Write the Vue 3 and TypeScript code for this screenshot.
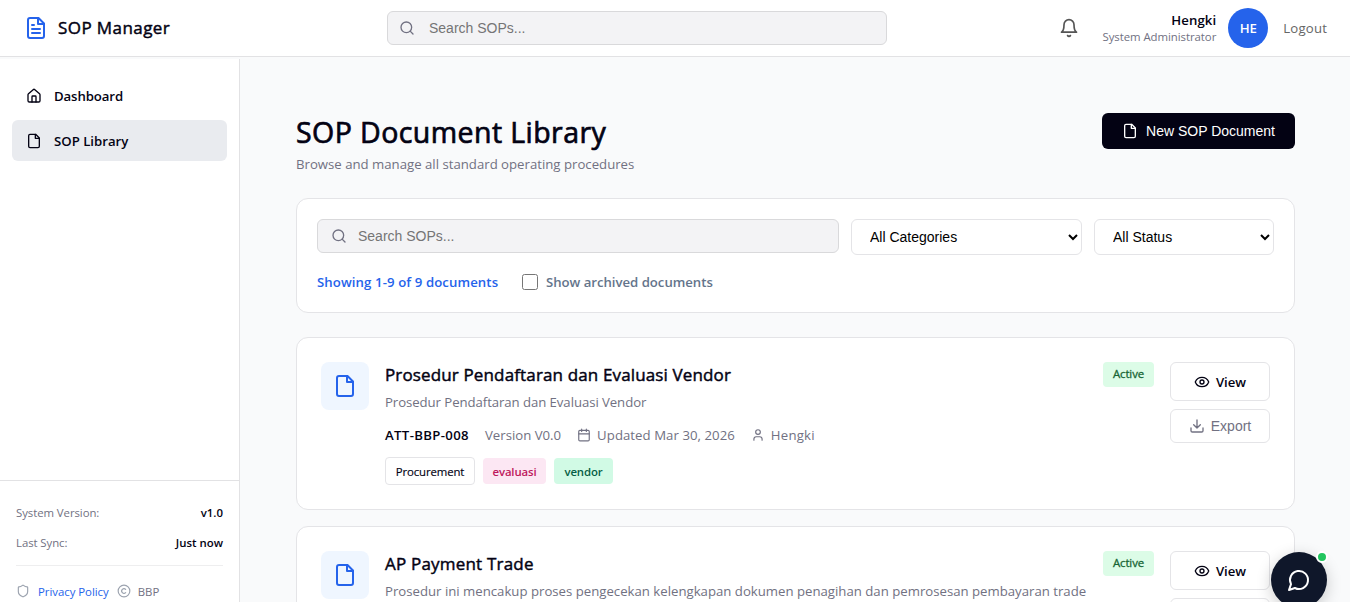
<script setup lang="ts">
interface Tag { label: string; tone: string }
interface Doc {
  title: string
  description: string
  code: string
  version: string
  updated: string
  owner: string
  category: string
  tags: Tag[]
  cls: string
}

const docs: Doc[] = [
  {
    title: 'Prosedur Pendaftaran dan Evaluasi Vendor',
    description: 'Prosedur Pendaftaran dan Evaluasi Vendor',
    code: 'ATT-BBP-008',
    version: 'Version V0.0',
    updated: 'Updated Mar 30, 2026',
    owner: 'Hengki',
    category: 'Procurement',
    tags: [{ label: 'evaluasi', tone: 'pink' }, { label: 'vendor', tone: 'mint' }],
    cls: 'doc-a',
  },
  {
    title: 'AP Payment Trade',
    description: 'Prosedur ini mencakup proses pengecekan kelengkapan dokumen penagihan dan pemrosesan pembayaran trade',
    code: '',
    version: '',
    updated: '',
    owner: '',
    category: '',
    tags: [],
    cls: 'doc-b',
  },
]
</script>

<template>
  <div class="app">
    <header class="topbar">
      <div class="brand">
        <svg class="ic brand-ic" viewBox="0 0 24 24"><path d="M14.5 2H6a2 2 0 0 0-2 2v16a2 2 0 0 0 2 2h12a2 2 0 0 0 2-2V7.5L14.5 2z" /><path d="M14 2v6h6M10 9H8M16 13H8M16 17H8" /></svg>
        <span class="brand-name">SOP Manager</span>
      </div>
      <div class="search top-search">
        <svg class="ic" viewBox="0 0 24 24"><circle cx="11" cy="11" r="8" /><path d="m21 21-4.3-4.3" /></svg>
        <input type="text" placeholder="Search SOPs..." />
      </div>
      <div class="account">
        <svg class="ic bell" viewBox="0 0 24 24"><path d="M10.3 21a1.94 1.94 0 0 0 3.4 0" /><path d="M18 8A6 6 0 0 0 6 8c0 7-3 9-3 9h18s-3-2-3-9" /></svg>
        <div class="who">
          <div class="who-name">Hengki</div>
          <div class="who-role">System Administrator</div>
        </div>
        <div class="avatar">HE</div>
        <a class="logout">Logout</a>
      </div>
    </header>

    <div class="body">
      <aside class="sidebar">
        <nav>
          <a class="nav-item">
            <svg class="ic" viewBox="0 0 24 24"><path d="M3 10a2 2 0 0 1 .7-1.5l7-6a2 2 0 0 1 2.6 0l7 6A2 2 0 0 1 21 10v9a2 2 0 0 1-2 2H5a2 2 0 0 1-2-2z" /><path d="M15 21v-8a1 1 0 0 0-1-1h-4a1 1 0 0 0-1 1v8" /></svg>
            <span class="nav-dash">Dashboard</span>
          </a>
          <a class="nav-item active">
            <svg class="ic" viewBox="0 0 24 24"><path d="M14.5 2H6a2 2 0 0 0-2 2v16a2 2 0 0 0 2 2h12a2 2 0 0 0 2-2V7.5L14.5 2z" /><path d="M14 2v6h6" /></svg>
            <span class="nav-lib">SOP Library</span>
          </a>
        </nav>
        <div class="side-foot">
          <div class="foot-row"><span>System Version:</span><b>v1.0</b></div>
          <div class="foot-row"><span>Last Sync:</span><b>Just now</b></div>
          <div class="legal">
            <svg class="ic" viewBox="0 0 24 24"><path d="M20 13c0 5-3.5 7.5-7.66 8.95a1 1 0 0 1-.67-.01C7.5 20.5 4 18 4 13V6a1 1 0 0 1 1-1c2 0 4.5-1.2 6.24-2.72a1.17 1.17 0 0 1 1.52 0C14.51 3.81 17 5 19 5a1 1 0 0 1 1 1z" /></svg>
            <a>Privacy Policy</a>
            <svg class="ic copy" viewBox="0 0 24 24"><circle cx="12" cy="12" r="10" /><path d="M14.83 14.83a4 4 0 1 1 0-5.66" /></svg>
            <span class="bbp">BBP</span>
          </div>
        </div>
      </aside>

      <main>
        <div class="head">
          <div>
            <h1>SOP Document Library</h1>
            <p class="lead">Browse and manage all standard operating procedures</p>
          </div>
          <button class="new-btn">
            <svg class="ic" viewBox="0 0 24 24"><path d="M14.5 2H6a2 2 0 0 0-2 2v16a2 2 0 0 0 2 2h12a2 2 0 0 0 2-2V7.5L14.5 2z" /><path d="M14 2v6h6" /></svg>
            <span>New SOP Document</span>
          </button>
        </div>

        <section class="card filters">
          <div class="filter-row">
            <div class="search">
              <svg class="ic" viewBox="0 0 24 24"><circle cx="11" cy="11" r="8" /><path d="m21 21-4.3-4.3" /></svg>
              <input type="text" placeholder="Search SOPs..." />
            </div>
            <select class="sel-cat"><option>All Categories</option></select>
            <select class="sel-status"><option>All Status</option></select>
          </div>
          <div class="filter-info">
            <span class="count">Showing 1-9 of 9 documents</span>
            <label class="archived"><input type="checkbox" /><span>Show archived documents</span></label>
          </div>
        </section>

        <article v-for="d in docs" :key="d.title" class="card doc" :class="d.cls">
          <div class="doc-icon">
            <svg class="ic" viewBox="0 0 24 24"><path d="M14.5 2H6a2 2 0 0 0-2 2v16a2 2 0 0 0 2 2h12a2 2 0 0 0 2-2V7.5L14.5 2z" /><path d="M14 2v6h6" /></svg>
          </div>
          <div class="doc-main">
            <h3>{{ d.title }}</h3>
            <p class="desc">{{ d.description }}</p>
            <div v-if="d.code" class="meta">
              <b>{{ d.code }}</b>
              <span class="version">{{ d.version }}</span>
              <span class="meta-item">
                <svg class="ic" viewBox="0 0 24 24"><rect x="3" y="4" width="18" height="18" rx="2" /><path d="M8 2v4M16 2v4M3 10h18" /></svg>
                <span class="updated">{{ d.updated }}</span>
              </span>
              <span class="meta-item">
                <svg class="ic" viewBox="0 0 24 24"><path d="M19 21v-2a4 4 0 0 0-4-4H9a4 4 0 0 0-4 4v2" /><circle cx="12" cy="7" r="4" /></svg>
                <span class="owner">{{ d.owner }}</span>
              </span>
            </div>
            <div v-if="d.category" class="tags">
              <span class="tag outline">{{ d.category }}</span>
              <span v-for="t in d.tags" :key="t.label" class="tag" :class="t.tone">{{ t.label }}</span>
            </div>
          </div>
          <span class="status">Active</span>
          <div class="actions">
            <button class="view">
              <svg class="ic" viewBox="0 0 24 24"><path d="M2.06 12.35a1 1 0 0 1 0-.7 10.75 10.75 0 0 1 19.88 0 1 1 0 0 1 0 .7 10.75 10.75 0 0 1-19.88 0" /><circle cx="12" cy="12" r="3" /></svg>
              <span>View</span>
            </button>
            <button class="export">
              <svg class="ic" viewBox="0 0 24 24"><path d="M21 15v4a2 2 0 0 1-2 2H5a2 2 0 0 1-2-2v-4M7 10l5 5 5-5M12 15V3" /></svg>
              <span>Export</span>
            </button>
          </div>
        </article>
      </main>
    </div>

    <button class="chat">
      <svg class="ic" viewBox="0 0 24 24"><path d="M7.9 20A9 9 0 1 0 4 16.1L2 22Z" /></svg>
      <span class="dot"></span>
    </button>
  </div>
</template>

<style>
body { margin: 0; overflow: hidden; }
</style>

<style scoped>
* { box-sizing: border-box; }
.app {
  position: relative;
  height: 602px;
  overflow: hidden;
  background: #f9fafb;
  color: #030213;
  font-family: "Segoe UI", "Open Sans", "Noto Sans", sans-serif;
  font-size: 13.2px;
  white-space: nowrap;
  display: flex;
  flex-direction: column;
}
h1, h3, p { margin: 0; }
button { cursor: pointer; }
.ic { width: 16px; height: 16px; fill: none; stroke: currentColor; stroke-width: 2; stroke-linecap: round; stroke-linejoin: round; flex: none; }

.topbar { height: 57px; flex: none; background: #fff; border-bottom: 1px solid #e2e2e4; display: flex; align-items: center; }
.brand { width: 387px; padding-left: 24px; display: flex; align-items: center; gap: 10px; }
.brand-ic { width: 24px; height: 24px; color: #2563eb; }
.brand-name { font-size: 17px; letter-spacing: 0.42px; line-height: 24px; -webkit-text-stroke: 0.45px currentColor; }
.search { height: 34px; display: flex; align-items: center; border: 1px solid #d9d9db; border-radius: 6px; background: #f3f3f5; padding-left: 13px; gap: 11px; color: #717182; }
.search input { flex: 1; min-width: 0; border: 0; padding: 0; background: none; outline: none; font: 14px "Liberation Sans", Arial, sans-serif; }
.search input::placeholder { color: #757575; }
.top-search { width: 500px; padding-left: 11px; gap: 14px; }
.account { margin-left: auto; display: flex; align-items: center; padding-right: 23px; }
.bell { width: 20px; height: 20px; color: #555; margin-right: 23px; }
.who { text-align: right; line-height: 17px; margin-right: 12px; }
.who-name { font-weight: 600; letter-spacing: 0.1px; }
.who-role { font-size: 11.4px; letter-spacing: -0.05px; color: #717182; line-height: 16px; }
.avatar { width: 40px; height: 40px; border-radius: 50%; background: #2563eb; color: #fff; font-weight: 600; display: flex; align-items: center; justify-content: center; margin-right: 15px; }
.logout { color: #666; letter-spacing: 0.2px; margin-right: -0.2px; }

.body { flex: 1; min-height: 0; display: flex; }
.sidebar { width: 240px; flex: none; margin-top: 2px; background: #fff; border-right: 1px solid #e2e2e4; display: flex; flex-direction: column; justify-content: space-between; }
nav { padding: 16px 12px 0; display: flex; flex-direction: column; gap: 4px; }
.nav-item { height: 41px; border-radius: 6px; padding-left: 14px; display: flex; align-items: center; gap: 12px; font-weight: 600; }
.nav-item.active { background: #e9ebef; }
.nav-dash { letter-spacing: -0.1px; }
.side-foot { height: 122px; border-top: 1px solid #e2e2e4; padding: 16px 16px 0; font-size: 11.4px; color: #717182; }
.foot-row { height: 30px; display: flex; justify-content: space-between; align-items: center; letter-spacing: -0.07px; }
.foot-row b { color: #030213; font-weight: 600; letter-spacing: 0; }
.legal { border-top: 1px solid #eeeeef; margin-top: 8px; height: 51px; display: flex; align-items: center; gap: 8px; }
.legal .ic { width: 14px; height: 14px; color: #9ca3af; }
.legal .copy { margin-right: -1px; }
.legal a { color: #2563eb; letter-spacing: -0.03px; }

main { flex: 1; min-width: 0; padding: 56px 55px 0 56px; }
.head { display: flex; justify-content: space-between; align-items: flex-start; height: 85px; }
h1 { font-size: 28.5px; line-height: 38px; padding-bottom: 2px; font-weight: 400; letter-spacing: 0.43px; -webkit-text-stroke: 0.7px currentColor; }
.lead { color: #717182; line-height: 22px; }
.new-btn { width: 193px; height: 36px; border: 0; border-radius: 6px; background: #030213; color: #fff; display: flex; align-items: center; justify-content: center; gap: 8px; padding: 0; font: 14px "Liberation Sans", Arial, sans-serif; }

.card { background: #fff; border: 1px solid #e4e4e7; border-radius: 12px; }
.filters { height: 115px; padding: 20px; margin-bottom: 24px; }
.filter-row { display: flex; gap: 12px; align-items: flex-start; height: 36px; }
.filter-row .search { flex: 1; }
select { height: 36px; border: 1px solid #e4e4e7; border-radius: 6px; background: #fff; color: #000; padding: 0 0 0 14px; font: 14px "Liberation Sans", Arial, sans-serif; }
.sel-cat { width: 231px; }
.sel-status { width: 180px; }
.filter-info { display: flex; align-items: center; height: 54px; font-weight: 600; }
.count { color: #2563eb; width: 205px; letter-spacing: 0.1px; }
.archived { display: flex; align-items: center; gap: 8px; color: #64748b; letter-spacing: -0.03px; }
.archived input { width: 16px; height: 16px; margin: 0; }

.doc { height: 173px; padding: 24px; margin-bottom: 16px; display: flex; align-items: flex-start; }
.doc-icon { width: 48px; height: 48px; border-radius: 8px; background: #eff6ff; color: #2563eb; display: flex; align-items: center; justify-content: center; flex: none; margin-right: 16px; }
.doc-icon .ic { width: 24px; height: 24px; }
.doc-main { flex: 1; min-width: 0; }
h3 { font-size: 17px; line-height: 26px; font-weight: 400; letter-spacing: 0.14px; -webkit-text-stroke: 0.45px currentColor; }
.doc-b h3 { letter-spacing: 0.2px; }
.desc { color: #717182; line-height: 22px; margin-top: 3px; }
.doc-a .desc { letter-spacing: -0.07px; }
.meta { display: flex; align-items: center; gap: 16px; height: 22px; margin-top: 11px; color: #717182; }
.meta b { color: #030213; font-weight: 600; letter-spacing: 0.34px; }
.updated { letter-spacing: 0.05px; }
.owner { letter-spacing: 0.2px; }
.meta-item { display: flex; align-items: center; gap: 6px; }
.meta-item .ic { width: 14px; height: 14px; }
.tags { display: flex; align-items: center; gap: 8px; margin-top: 11px; height: 28px; }
.tag { height: 26px; display: flex; align-items: center; justify-content: center; border-radius: 4px; font-size: 11.4px; font-weight: 600; letter-spacing: -0.12px; }
.tag.outline { width: 90px; height: 28px; border: 1px solid #e4e4e7; font-weight: 400; -webkit-text-stroke: 0.15px currentColor; }
.tag.pink { width: 63px; background: #fce7f3; color: #be185d; }
.tag.mint { width: 59px; background: #d1fae5; color: #065f46; }
.status { width: 51px; height: 25px; border-radius: 4px; background: #dcfce7; color: #166534; font-size: 11.4px; padding-bottom: 2px; -webkit-text-stroke: 0.3px currentColor; letter-spacing: -0.1px; display: flex; align-items: center; justify-content: center; margin-right: 16px; }
.actions { width: 100px; display: flex; flex-direction: column; gap: 8px; }
.actions button { background: #fff; border: 1px solid #e4e4e7; border-radius: 6px; padding: 0; display: flex; align-items: center; justify-content: center; }
.actions .view { height: 39px; color: #030213; gap: 6px; font: 600 13.2px "Segoe UI", "Open Sans", sans-serif; }
.actions .export { height: 34px; color: #717182; gap: 6px; font: 14px "Liberation Sans", Arial, sans-serif; }

.chat { position: absolute; left: 1271px; top: 552px; width: 56px; height: 56px; border: 0; padding: 0; border-radius: 50%; background: #0f172a; color: #fff; display: flex; align-items: center; justify-content: center; box-shadow: 0 4px 16px rgba(0, 0, 0, 0.2); }
.chat .ic { width: 24px; height: 24px; }
.dot { position: absolute; right: -1px; top: -1px; width: 12px; height: 12px; border: 2px solid #fff; border-radius: 50%; background: #22c55e; }
</style>
